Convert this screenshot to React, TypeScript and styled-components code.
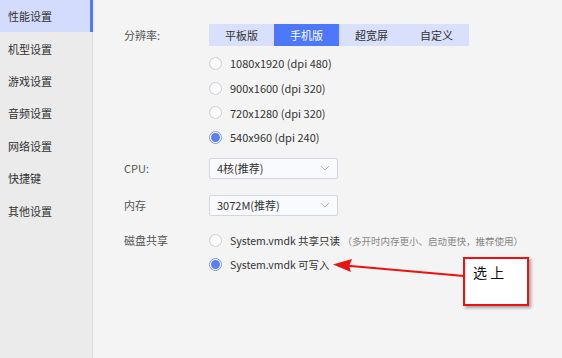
import styled, { createGlobalStyle } from 'styled-components';

const Global = createGlobalStyle`
  html, body { margin: 0; padding: 0; }
  body {
    font-family: "Noto Sans CJK SC", "Noto Sans", sans-serif;
    background: #f4f4f4;
  }
`;

const Frame = styled.div`
  position: relative;
  display: flex;
  width: 562px;
  height: 358px;
  overflow: hidden;
  background: #f4f4f4;
`;

const Sidebar = styled.div`
  width: 92px;
  flex-shrink: 0;
  background: #ebebeb;
  border-right: 1px solid #e0e0e0;
  display: flex;
  flex-direction: column;
`;

const NavItem = styled.div<{ $active?: boolean }>`
  height: 32.4px;
  display: flex;
  align-items: center;
  padding-left: 8px;
  font-size: 11px;
  color: #333;
  background: ${(p) => (p.$active ? '#d3dcfc' : 'transparent')};
  border-right: 3px solid ${(p) => (p.$active ? '#5577fb' : 'transparent')};
  margin-right: -1px;
`;

const Content = styled.div`
  flex: 1;
  padding: 24px 0 0 31px;
  display: flex;
  flex-direction: column;
`;

const Row = styled.div<{ $mt?: number }>`
  display: flex;
  align-items: flex-start;
  margin-top: ${(p) => p.$mt ?? 0}px;
`;

const Label = styled.div<{ $h?: number }>`
  width: 85px;
  flex-shrink: 0;
  height: ${(p) => p.$h ?? 22}px;
  line-height: ${(p) => p.$h ?? 22}px;
  font-size: 11px;
  color: #555;
`;

const Controls = styled.div`
  display: flex;
  flex-direction: column;
`;

const Segmented = styled.div`
  display: flex;
  height: 22px;
`;

const Segment = styled.div<{ $active?: boolean }>`
  width: 65px;
  display: flex;
  align-items: center;
  justify-content: center;
  font-size: 11px;
  color: ${(p) => (p.$active ? '#fff' : '#333')};
  background: ${(p) => (p.$active ? '#4d77fd' : '#d8e0fb')};
`;

const RadioList = styled.div<{ $mt?: number }>`
  display: flex;
  flex-direction: column;
  margin-top: ${(p) => p.$mt ?? 0}px;
`;

const RadioRow = styled.div`
  display: flex;
  align-items: center;
  height: 24.7px;
`;

const Circle = styled.span<{ $on?: boolean }>`
  width: 13px;
  height: 13px;
  box-sizing: border-box;
  border-radius: 50%;
  border: 1px solid ${(p) => (p.$on ? '#7d97fb' : '#c9ccd6')};
  background: #fff;
  display: inline-flex;
  align-items: center;
  justify-content: center;
  margin-right: 8px;
  &::after {
    content: '';
    width: 9px;
    height: 9px;
    border-radius: 50%;
    background: ${(p) => (p.$on ? '#5b7ffb' : 'transparent')};
  }
`;

const RadioText = styled.span<{ $size?: number }>`
  font-size: ${(p) => p.$size ?? 11}px;
  color: #333;
  white-space: nowrap;
`;

const Hint = styled.span`
  font-size: 9.5px;
  color: #888;
`;

const Select = styled.div`
  width: 129px;
  height: 21px;
  box-sizing: border-box;
  border: 1px solid #d3d6df;
  border-radius: 2px;
  background: #f9fafd;
  display: flex;
  align-items: center;
  justify-content: space-between;
  padding: 0 7px;
  font-size: 11px;
  color: #333;
`;

const Callout = styled.div`
  position: absolute;
  left: 463px;
  top: 257px;
  width: 66px;
  height: 49px;
  box-sizing: border-box;
  border: 2px solid #ee1111;
  background: #fff;
  box-shadow: 2px 2px 3px rgba(0, 0, 0, 0.35);
  padding: 3px 0 0 8px;
  font-size: 14px;
  color: #111;
  white-space: pre;
`;

const Arrow = styled.svg`
  position: absolute;
  left: 0;
  top: 0;
  pointer-events: none;
`;

const nav = ['性能设置', '机型设置', '游戏设置', '音频设置', '网络设置', '快捷键', '其他设置'];
const segs = ['平板版', '手机版', '超宽屏', '自定义'];
const resolutions = [
  '1080x1920 (dpi 480)',
  '900x1600 (dpi 320)',
  '720x1280 (dpi 320)',
  '540x960 (dpi 240)',
];

function Chevron() {
  return (
    <svg width="10" height="6" viewBox="0 0 10 6">
      <path d="M1 1 L5 5 L9 1" fill="none" stroke="#b4b8c2" strokeWidth="1" />
    </svg>
  );
}

function App() {
  return (
    <Frame>
      <Global />
      <Sidebar>
        {nav.map((n, i) => (
          <NavItem key={n} $active={i === 0}>
            {n}
          </NavItem>
        ))}
      </Sidebar>
      <Content>
        <Row>
          <Label>分辨率:</Label>
          <Controls>
            <Segmented>
              {segs.map((s, i) => (
                <Segment key={s} $active={i === 1}>
                  {s}
                </Segment>
              ))}
            </Segmented>
            <RadioList $mt={5}>
              {resolutions.map((r, i) => (
                <RadioRow key={r}>
                  <Circle $on={i === 3} />
                  <RadioText>{r}</RadioText>
                </RadioRow>
              ))}
            </RadioList>
          </Controls>
        </Row>
        <Row $mt={8}>
          <Label $h={21}>CPU:</Label>
          <Select>
            4核(推荐)
            <Chevron />
          </Select>
        </Row>
        <Row $mt={16}>
          <Label $h={21}>内存</Label>
          <Select>
            3072M(推荐)
            <Chevron />
          </Select>
        </Row>
        <Row $mt={12}>
          <Label $h={24.7}>磁盘共享</Label>
          <RadioList>
            <RadioRow>
              <Circle />
              <RadioText $size={10.5}>
                System.vmdk 共享只读 <Hint>（多开时内存更小、启动更快，推荐使用）</Hint>
              </RadioText>
            </RadioRow>
            <RadioRow>
              <Circle $on />
              <RadioText $size={10.5}>System.vmdk 可写入</RadioText>
            </RadioRow>
          </RadioList>
        </Row>
      </Content>
      <Arrow width="562" height="358">
        <line x1="464" y1="276" x2="345" y2="265.5" stroke="#ee1111" strokeWidth="2" />
        <polygon points="333,264.5 352,259 349,266 351,272" fill="#ee1111" />
      </Arrow>
      <Callout>{'选 上'}</Callout>
    </Frame>
  );
}

export default App;
